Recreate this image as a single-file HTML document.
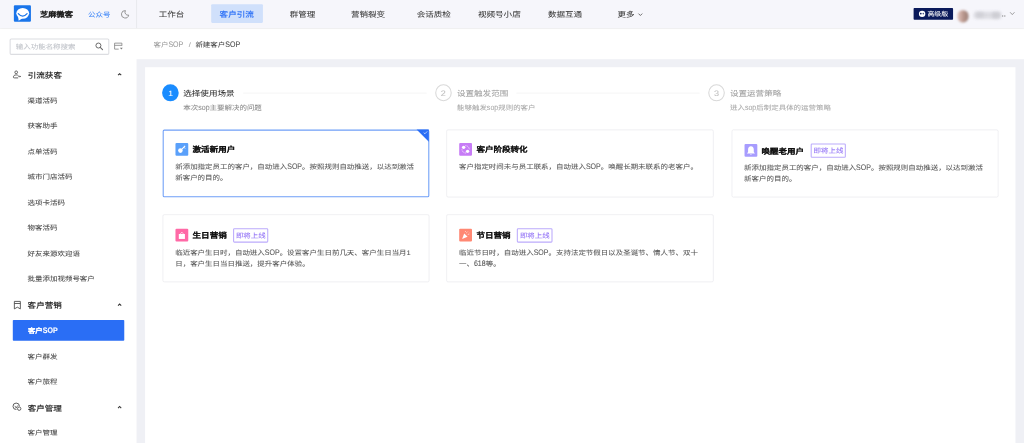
<!DOCTYPE html>
<html lang="zh-CN"><head><meta charset="utf-8">
<style>
*{box-sizing:border-box;margin:0;padding:0}
html,body{width:1024px;height:443px;overflow:hidden;background:#fff}
#root{text-rendering:geometricPrecision;position:absolute;left:0;top:0;width:1920px;height:831px;transform:scale(0.533333);transform-origin:0 0;font-family:"Liberation Sans",sans-serif;overflow:hidden}
.a{position:absolute}
.l{display:inline-block;font-size:13.2px;transform:scaleY(1.3);transform-origin:50% 62%}
.t{white-space:nowrap;transform:scaleY(.88);font-weight:500;-webkit-text-stroke-width:.12px}
svg{overflow:visible}
</style></head><body><div id="root">
<div class="a " style="left:0.00px;top:0.00px;width:1920.00px;height:52.50px;background:#f6f6fb;box-shadow:0 1px 0 rgba(0,0,0,.07),0 2px 4px rgba(0,0,0,.05)"></div>
<div class="a " style="left:26.06px;top:9.56px;width:31.88px;height:31.88px;background:#1a75ea;border-radius:2px"><svg width="100%" height="100%" viewBox="0 0 17 17"><ellipse cx="8.85" cy="8" rx="6.4" ry="5.4" fill="#fff"/><path d="M4.2 11.2L4.8 15.3 8.6 13z" fill="#fff"/><path d="M4.4 8.3Q8.8 13.2 13.2 8.3" stroke="#1a75ea" stroke-width="1.3" fill="none" stroke-linecap="round"/></svg></div>
<div class="a t" style="left:75.00px;top:17.06px;font-size:15.5px;line-height:23.25px;font-weight:bold;color:#1e1e1e;-webkit-text-stroke-width:.2px">芝麻微客</div>
<div class="a t" style="left:165.00px;top:17.44px;font-size:14px;line-height:21.0px;color:#3d86f7">公众号</div>
<svg class="a" style="left:225.75px;top:17.81px;" width="16.88px" height="16.88px" viewBox="0 0 9 9"><path d="M4.9 1A3.7 3.7 0 1 0 8.2 5.5 3 3 0 0 1 4.9 1z" fill="none" stroke="#8a8a8a" stroke-width=".9" stroke-linejoin="round"/></svg>
<div class="a " style="left:255.00px;top:0.00px;width:1.88px;height:52.50px;background:#e9eaee"></div>
<div class="a " style="left:395.62px;top:7.88px;width:97.50px;height:35.25px;background:#d0e0fb;border-radius:2px"></div>
<div class="a t" style="left:297.56px;top:16.12px;font-size:16px;line-height:24.0px;color:#3a3a3a">工作台</div>
<div class="a t" style="left:411.75px;top:16.12px;font-size:16px;line-height:24.0px;color:#2a6ff6;-webkit-text-stroke-width:.4px">客户引流</div>
<div class="a t" style="left:543.19px;top:16.12px;font-size:16px;line-height:24.0px;color:#3a3a3a">群管理</div>
<div class="a t" style="left:658.12px;top:16.12px;font-size:16px;line-height:24.0px;color:#3a3a3a">营销裂变</div>
<div class="a t" style="left:781.31px;top:16.12px;font-size:16px;line-height:24.0px;color:#3a3a3a">会话质检</div>
<div class="a t" style="left:896.25px;top:16.12px;font-size:16px;line-height:24.0px;color:#3a3a3a">视频号小店</div>
<div class="a t" style="left:1027.50px;top:16.12px;font-size:16px;line-height:24.0px;color:#3a3a3a">数据互通</div>
<div class="a t" style="left:1157.81px;top:16.12px;font-size:16px;line-height:24.0px;color:#3a3a3a">更多</div>
<svg class="a" style="left:1195.88px;top:24.38px;" width="9.38px" height="6.56px" viewBox="0 0 5 3.5"><path d="M.6 .8l1.9 1.9 1.9-1.9" fill="none" stroke="#555" stroke-width=".85"/></svg>
<div class="a " style="left:1712.62px;top:15.00px;width:74.25px;height:21.94px;background:#0b1a5b;border-radius:1.5px"></div>
<div class="a " style="left:1722.75px;top:20.06px;width:12.00px;height:12.00px;background:#fff;border-radius:50%"></div>
<div class="a " style="left:1725.38px;top:24.38px;width:2.62px;height:2.63px;background:#0b1a5b;border-radius:50%"></div>
<div class="a " style="left:1729.50px;top:24.38px;width:2.62px;height:2.63px;background:#0b1a5b;border-radius:50%"></div>
<div class="a t" style="left:1738.88px;top:17.44px;font-size:13px;line-height:19.5px;color:#fff;font-weight:500">高级版</div>
<div class="a " style="left:1794.94px;top:18.75px;width:21.00px;height:23.06px;background:linear-gradient(90deg,#e3c6c0,#b8968c 55%,#9c8078);border-radius:45%;filter:blur(2px)"></div>
<div class="a " style="left:1826.25px;top:21.56px;width:50.62px;height:13.12px;background:#dcdce2;border-radius:4px;filter:blur(3px)"></div>
<div class="a " style="left:1830.00px;top:23.44px;width:15.00px;height:9.38px;background:#d0d0d6;border-radius:4px;filter:blur(2.5px)"></div>
<div class="a " style="left:1860.00px;top:22.50px;width:15.00px;height:11.25px;background:#cdcdd3;border-radius:4px;filter:blur(2.5px)"></div>
<div class="a " style="left:1878.75px;top:28.69px;width:2.25px;height:1.88px;background:#777"></div>
<div class="a " style="left:1882.50px;top:28.69px;width:2.25px;height:1.88px;background:#777"></div>
<svg class="a" style="left:1893.38px;top:21.94px;" width="10.12px" height="6.56px" viewBox="0 0 6 4"><path d="M.5 .6l2.5 2.7 2.5-2.7" fill="none" stroke="#777" stroke-width=".8"/></svg>
<div class="a " style="left:17.81px;top:71.81px;width:187.69px;height:30.94px;border:2px solid #dcdde1;border-radius:3px;background:#fff"></div>
<div class="a t" style="left:29.62px;top:77.44px;font-size:14px;line-height:21.0px;color:#bfc2c8">输入功能名称搜索</div>
<svg class="a" style="left:178.12px;top:78.75px;" width="16.88px" height="16.88px" viewBox="0 0 9 9"><circle cx="3.5" cy="3.4" r="2.5" fill="none" stroke="#6a6a6a" stroke-width="1"/><path d="M5.3 5.3L7.6 7.6" stroke="#6a6a6a" stroke-width="1.1" stroke-linecap="round"/></svg>
<svg class="a" style="left:213.00px;top:79.12px;" width="17.62px" height="15.37px" viewBox="0 0 9.4 8.2"><path d="M5.1 7H1V1h7.3v2.6M1 3.2h7.3" fill="none" stroke="#7a7a7a" stroke-width=".75"/><path d="M6.3 5.6h2.9L7.75 7.4z" fill="#7a7a7a"/></svg>
<svg class="a" style="left:24.00px;top:132.00px;" width="15.75px" height="15.75px" viewBox="0 0 8.4 8.4"><circle cx="3.4" cy="1.9" r="1.35" fill="none" stroke="#555" stroke-width=".9"/><path d="M5.6 5.1C5.1 4.7 4.3 4.5 3.3 4.5 1.6 4.5.6 5.4.6 6.7c0 .6.3.8.9.8h3.9" fill="none" stroke="#555" stroke-width=".9"/><path d="M5.5 6.1h2.2M7 5.4l.8.7-.8.7" fill="none" stroke="#555" stroke-width=".8"/></svg>
<div class="a t" style="left:52.12px;top:130.50px;font-size:16px;line-height:24.0px;font-weight:500;color:#111;-webkit-text-stroke-width:.3px">引流获客</div>
<svg class="a" style="left:219.94px;top:136.12px;" width="8.62px" height="6.38px" viewBox="0 0 4.6 3.4"><path d="M.7 2.7L2.3 1.1 3.9 2.7" fill="none" stroke="#333" stroke-width="1.05"/></svg>
<div class="a t" style="left:51.75px;top:178.69px;font-size:14px;line-height:21.0px;color:#444">渠道活码</div>
<div class="a t" style="left:51.75px;top:225.56px;font-size:14px;line-height:21.0px;color:#444">获客助手</div>
<div class="a t" style="left:51.75px;top:274.31px;font-size:14px;line-height:21.0px;color:#444">点单活码</div>
<div class="a t" style="left:51.75px;top:321.19px;font-size:14px;line-height:21.0px;color:#444">城市门店活码</div>
<div class="a t" style="left:51.75px;top:369.94px;font-size:14px;line-height:21.0px;color:#444">选项卡活码</div>
<div class="a t" style="left:51.75px;top:416.81px;font-size:14px;line-height:21.0px;color:#444">物客活码</div>
<div class="a t" style="left:51.75px;top:465.56px;font-size:14px;line-height:21.0px;color:#444">好友来源欢迎语</div>
<div class="a t" style="left:51.75px;top:512.44px;font-size:14px;line-height:21.0px;color:#444">批量添加视频号客户</div>
<svg class="a" style="left:25.50px;top:563.62px;" width="13.12px" height="16.12px" viewBox="0 0 7 8.6"><path d="M.5 8.1V.6h6v7.5L3.5 6.4z" fill="none" stroke="#444" stroke-width=".85" stroke-linejoin="round"/><path d="M.5 2.7h6" stroke="#444" stroke-width=".85"/></svg>
<div class="a t" style="left:51.75px;top:561.75px;font-size:16px;line-height:24.0px;font-weight:500;color:#111;-webkit-text-stroke-width:.3px">客户营销</div>
<svg class="a" style="left:219.94px;top:568.12px;" width="8.62px" height="6.38px" viewBox="0 0 4.6 3.4"><path d="M.7 2.7L2.3 1.1 3.9 2.7" fill="none" stroke="#333" stroke-width="1.05"/></svg>
<div class="a " style="left:24.38px;top:600.00px;width:208.50px;height:39.19px;background:#2a6ef5;border-radius:1.5px"></div>
<div class="a t" style="left:52.31px;top:609.94px;font-size:14px;line-height:21.0px;color:#fff;font-weight:bold;-webkit-text-stroke-width:.2px">客户<span class="l">SOP</span></div>
<div class="a t" style="left:51.75px;top:658.69px;font-size:14px;line-height:21.0px;color:#444">客户群发</div>
<div class="a t" style="left:51.75px;top:705.56px;font-size:14px;line-height:21.0px;color:#444">客户旅程</div>
<svg class="a" style="left:24.00px;top:755.25px;" width="16.50px" height="15.75px" viewBox="0 0 8.8 8.4"><path d="M6.6 3.6A3.2 3.2 0 1 0 3.6 6.8" fill="none" stroke="#555" stroke-width=".95"/><path d="M2.1 3.2l1.3 2.2 1.6-2.6" fill="none" stroke="#555" stroke-width=".8"/><circle cx="6.4" cy="6" r="1.7" fill="#fff" stroke="#555" stroke-width=".9"/></svg>
<div class="a t" style="left:51.94px;top:754.88px;font-size:16px;line-height:24.0px;font-weight:500;color:#111;-webkit-text-stroke-width:.3px">客户管理</div>
<svg class="a" style="left:219.94px;top:759.94px;" width="8.62px" height="6.38px" viewBox="0 0 4.6 3.4"><path d="M.7 2.7L2.3 1.1 3.9 2.7" fill="none" stroke="#333" stroke-width="1.05"/></svg>
<div class="a t" style="left:51.75px;top:801.19px;font-size:14px;line-height:21.0px;color:#444">客户管理</div>
<div class="a " style="left:255.94px;top:110.62px;width:1664.06px;height:720.00px;background:#eff0f5"></div>
<div class="a " style="left:271.88px;top:125.62px;width:1632.19px;height:705.00px;background:#fff"></div>
<div class="a t" style="left:287.81px;top:73.69px;font-size:14px;line-height:21.0px;color:#9a9a9a">客户<span class="l">SOP</span></div>
<div class="a t" style="left:353.81px;top:73.69px;font-size:14px;line-height:21.0px;color:#9a9a9a">/</div>
<div class="a t" style="left:366.38px;top:73.69px;font-size:14px;line-height:21.0px;color:#444">新建客户<span class="l">SOP</span></div>
<div class="a " style="left:304.12px;top:158.25px;width:31.31px;height:31.50px;background:#1a8cff;border-radius:50%"></div>
<div class="a t" style="left:315.56px;top:164.25px;font-size:16px;line-height:24.0px;color:#fff">1</div>
<div class="a t" style="left:343.69px;top:164.25px;font-size:16px;line-height:24.0px;color:#2f2f2f">选择使用场景</div>
<div class="a " style="left:456.38px;top:173.62px;width:343.50px;height:1.88px;background:#ececec"></div>
<div class="a t" style="left:343.69px;top:191.81px;font-size:14px;line-height:21.0px;color:#8a8a8a">本次<span class="l">sop</span>主要解决的问题</div>
<div class="a " style="left:816.00px;top:158.25px;width:30.75px;height:31.50px;border:2px solid #d9d9d9;border-radius:50%"></div>
<div class="a t" style="left:826.31px;top:162.56px;font-size:17px;line-height:25.5px;color:#bdbdbd">2</div>
<div class="a t" style="left:856.88px;top:164.25px;font-size:16px;line-height:24.0px;color:#9f9f9f">设置触发范围</div>
<div class="a " style="left:968.25px;top:173.62px;width:343.31px;height:1.88px;background:#ececec"></div>
<div class="a t" style="left:856.88px;top:191.81px;font-size:14px;line-height:21.0px;color:#a8a8a8">能够触发<span class="l">sop</span>规则的客户</div>
<div class="a " style="left:1327.88px;top:158.25px;width:31.31px;height:31.50px;border:2px solid #d9d9d9;border-radius:50%"></div>
<div class="a t" style="left:1338.56px;top:162.56px;font-size:17px;line-height:25.5px;color:#bdbdbd">3</div>
<div class="a t" style="left:1368.75px;top:164.25px;font-size:16px;line-height:24.0px;color:#9f9f9f">设置运营策略</div>
<div class="a t" style="left:1368.75px;top:191.81px;font-size:14px;line-height:21.0px;color:#a8a8a8">进入<span class="l">sop</span>后制定具体的运营策略</div>
<div class="a " style="left:304.88px;top:242.62px;width:499.69px;height:127.12px;border:2px solid #6f9ff7;border-radius:3px;background:#fff"></div>
<div class="a " style="left:329.25px;top:267.75px;width:24.00px;height:24.00px;background:#5aa0fa;border-radius:2px"><svg width="100%" height="100%" viewBox="0 0 13 13"><circle cx="5" cy="7.8" r="2.3" fill="#fff"/><path d="M6.6 6.3l3.2-3.2" stroke="#fff" stroke-width="1.1"/><path d="M8.6 4.4l1.1 1.2" stroke="#fff" stroke-width="1"/></svg></div>
<div class="a t" style="left:361.12px;top:269.81px;font-size:16px;line-height:24.0px;font-weight:bold;color:#111;-webkit-text-stroke-width:.2px">激活新用户</div>
<div class="a t" style="left:328.50px;top:302.44px;font-size:14px;line-height:21.0px;color:#555">新添加指定员工的客户，自动进入<span class="l">SOP</span>。按照规则自动推送，以达到激活</div>
<div class="a t" style="left:328.50px;top:323.06px;font-size:14px;line-height:21.0px;color:#555">新客户的目的。</div>
<div class="a" style="left:781.12px;top:242.62px;width:0;height:0;border-top:23.44px solid #2a6ef5;border-left:23.44px solid transparent"></div>
<svg class="a" style="left:792.94px;top:244.88px;" width="9.38px" height="7.50px" viewBox="0 0 6 5"><path d="M.8 2.4l1.6 1.5L5.2.9" fill="none" stroke="#fff" stroke-width=".8"/></svg>
<div class="a " style="left:837.00px;top:242.62px;width:500.81px;height:127.12px;border:1.6px solid #e3e3e8;border-radius:3px;background:#fff"></div>
<div class="a " style="left:861.38px;top:267.75px;width:24.00px;height:24.00px;background:#c77cf6;border-radius:2px"><svg width="100%" height="100%" viewBox="0 0 13 13"><circle cx="4.5" cy="4.5" r="1.7" fill="#fff"/><circle cx="8.5" cy="8.5" r="1.7" fill="#fff"/><path d="M6.2 2.8A3.8 3.8 0 0 1 10.2 6.6M6.8 10.2A3.8 3.8 0 0 1 2.8 6.4" fill="none" stroke="#fff" stroke-width=".75" stroke-dasharray="1 .6"/></svg></div>
<div class="a t" style="left:893.25px;top:269.81px;font-size:16px;line-height:24.0px;font-weight:bold;color:#111;-webkit-text-stroke-width:.2px">客户阶段转化</div>
<div class="a t" style="left:860.62px;top:302.44px;font-size:14px;line-height:21.0px;color:#555">客户指定时间未与员工联系，自动进入<span class="l">SOP</span>。唤醒长期未联系的老客户。</div>
<div class="a " style="left:1371.56px;top:242.62px;width:500.44px;height:127.12px;border:1.6px solid #e3e3e8;border-radius:3px;background:#fff"></div>
<div class="a " style="left:1395.94px;top:269.81px;width:24.00px;height:24.00px;background:#a79cfe;border-radius:2px"><svg width="100%" height="100%" viewBox="0 0 13 13"><path d="M6.5 2.4c-1.9 0-2.9 1.5-2.9 3.1v2.7L2.4 9.7h8.2L9.4 8.2V5.5c0-1.6-1-3.1-2.9-3.1z" fill="#fff"/><path d="M5.5 10.3h2l-1 .8z" fill="#fff"/></svg></div>
<div class="a t" style="left:1427.81px;top:273.56px;font-size:16px;line-height:24.0px;font-weight:bold;color:#111;-webkit-text-stroke-width:.2px">唤醒老用户</div>
<div class="a " style="left:1519.88px;top:269.25px;width:66.37px;height:26.62px;border:2px solid #bcabfc;border-radius:2.5px"></div>
<div class="a t" style="left:1525.31px;top:272.44px;font-size:14px;line-height:21.0px;color:#9070f5;font-weight:400">即将上线</div>
<div class="a t" style="left:1395.19px;top:304.31px;font-size:14px;line-height:21.0px;color:#555">新添加指定员工的客户，自动进入<span class="l">SOP</span>。按照规则自动推送，以达到激活</div>
<div class="a t" style="left:1395.19px;top:324.94px;font-size:14px;line-height:21.0px;color:#555">新客户的目的。</div>
<div class="a " style="left:304.88px;top:401.81px;width:499.69px;height:126.94px;border:1.6px solid #e3e3e8;border-radius:3px;background:#fff"></div>
<div class="a " style="left:329.25px;top:429.00px;width:24.00px;height:24.00px;background:#ff69a6;border-radius:2px"><svg width="100%" height="100%" viewBox="0 0 13 13"><path d="M3.4 5.3h6.2v5H3.4z" fill="#fff"/><path d="M4.8 5.3l1.7-2 1.7 2" fill="none" stroke="#fff" stroke-width=".6"/></svg></div>
<div class="a t" style="left:361.12px;top:431.06px;font-size:16px;line-height:24.0px;font-weight:bold;color:#111;-webkit-text-stroke-width:.2px">生日营销</div>
<div class="a " style="left:436.88px;top:428.06px;width:66.37px;height:26.62px;border:2px solid #bcabfc;border-radius:2.5px"></div>
<div class="a t" style="left:442.31px;top:431.81px;font-size:14px;line-height:21.0px;color:#9070f5;font-weight:400">即将上线</div>
<div class="a t" style="left:328.50px;top:463.69px;font-size:14px;line-height:21.0px;color:#555">临近客户生日时，自动进入<span class="l">SOP</span>。设置客户生日前几天、客户生日当月1</div>
<div class="a t" style="left:328.50px;top:484.31px;font-size:14px;line-height:21.0px;color:#555">日，客户生日当日推送，提升客户体验。</div>
<div class="a " style="left:837.00px;top:401.81px;width:500.81px;height:126.94px;border:1.6px solid #e3e3e8;border-radius:3px;background:#fff"></div>
<div class="a " style="left:861.38px;top:429.00px;width:24.00px;height:24.00px;background:#ff8873;border-radius:2px"><svg width="100%" height="100%" viewBox="0 0 13 13"><path d="M3 10.3l2.1-5.6 3.4 3.4z" fill="#fff"/><path d="M7.1 4.3l1.3-1.1M8.7 5.7l1.6-.4M6.2 2.3l.3.9M9.7 3.1l.4.4" stroke="#fff" stroke-width=".6"/></svg></div>
<div class="a t" style="left:893.25px;top:431.06px;font-size:16px;line-height:24.0px;font-weight:bold;color:#111;-webkit-text-stroke-width:.2px">节日营销</div>
<div class="a " style="left:969.38px;top:428.06px;width:66.37px;height:26.62px;border:2px solid #bcabfc;border-radius:2.5px"></div>
<div class="a t" style="left:974.81px;top:431.81px;font-size:14px;line-height:21.0px;color:#9070f5;font-weight:400">即将上线</div>
<div class="a t" style="left:860.62px;top:463.69px;font-size:14px;line-height:21.0px;color:#555">临近节日时，自动进入<span class="l">SOP</span>。支持法定节假日以及圣诞节、情人节、双十</div>
<div class="a t" style="left:860.62px;top:484.31px;font-size:14px;line-height:21.0px;color:#555">一、<span class="l">618</span>等。</div>
</div></body></html>
